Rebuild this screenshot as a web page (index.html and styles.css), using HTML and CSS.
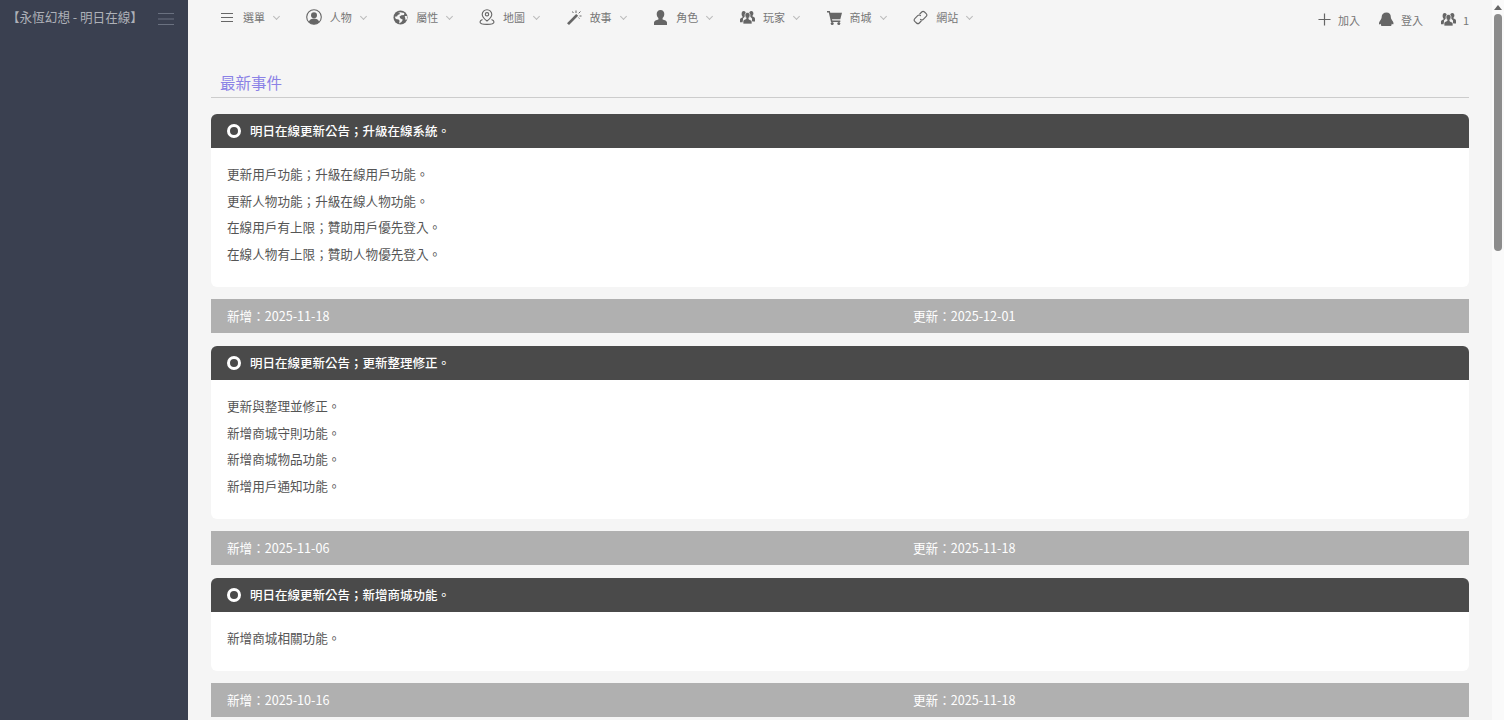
FILE: index.html
```html
<!DOCTYPE html>
<html lang="zh-Hant">
<head>
  <meta charset="UTF-8">
  <title>永恆幻想 - 明日在線</title>
  <link rel="stylesheet" href="styles.css">
</head>
<body>

<div class="layout">
  <aside class="sidebar">
    <span class="brand">【永恆幻想 - 明日在線】</span>
    <svg class="burger" width="16" height="12" viewBox="0 0 16 12"><path d="M0 .5h16M0 6h16M0 11.500h16" stroke="#6a7180" fill="none"/></svg>
  </aside>

  <div class="main">
    <nav class="topbar">
      <ul class="menu">
        <li><svg class="ico" viewBox="0 0 15 15"><path d="M1 3.500h12M1 7.500h12M1 11.500h12" stroke="#666" stroke-width="1.200" fill="none"/></svg><span>選單</span><i class="caret"></i></li>
        <li><svg class="ico big" viewBox="0 0 16 16"><circle cx="8" cy="8" r="7.300" fill="none" stroke="#666" stroke-width="1.100"/><circle cx="8" cy="6.300" r="3" fill="#666"/><path d="M2.800 13c.8-2.700 3-3.400 5.200-3.400s4.400.7 5.200 3.400a7.200 7.200 0 0 1-10.400 0z" fill="#666"/></svg><span>人物</span><i class="caret"></i></li>
        <li><svg class="ico" viewBox="0 0 16 16"><circle cx="8" cy="8" r="7.500" fill="#666"/><path d="M4.500 1.800l2.800 1-.3 1.700-2 .7-.5 1.500-2.500.6L3 9.500l3 .5 1 1.500-.5 3L9 12.800l1.500-2.300-2.800-1.800-.7-1.700L9 5.500l2.800-.3.200-2zM12.500 6.300l2.300.2.200 3-1.500 1.500z" fill="#f5f5f5"/></svg><span>屬性</span><i class="caret"></i></li>
        <li><svg class="ico big" viewBox="0 0 16 16"><path d="M8 .7a4.800 4.800 0 0 1 4.800 4.800C12.800 8.400 8 12 8 12S3.200 8.400 3.200 5.500A4.800 4.800 0 0 1 8 .7z" fill="none" stroke="#666" stroke-width="1.100"/><circle cx="8" cy="5.300" r="1.700" fill="none" stroke="#666" stroke-width="1.100"/><path d="M3.500 10.500C1.800 11.200 1 12 1 13c0 1.400 3 2.400 7 2.400s7-1 7-2.400c0-1-.8-1.800-2.500-2.500" fill="none" stroke="#666" stroke-width="1.100"/></svg><span>地圖</span><i class="caret"></i></li>
        <li><svg class="ico" viewBox="0 0 15 15"><path d="M0 13.200L9.200 4l2 1.800L2 15z" fill="#666"/><path d="M5.500 1.500l.8 1.500M9 .5v2.500M13.500 1.500l-1.800 1.800M14.500 6h-2M12.500 8.500l-1-.8" stroke="#666" fill="none"/></svg><span>故事</span><i class="caret"></i></li>
        <li><svg class="ico" viewBox="0 0 15 15"><path d="M7.500 0c2.500 0 3.800 1.800 3.800 4 0 1.800-.8 3.300-1.700 4v1.500c2 .8 4.400 1.200 4.400 3V15H1v-2.500c0-1.800 2.400-2.200 4.400-3V8C4.500 7.300 3.700 5.800 3.700 4c0-2.200 1.300-4 3.800-4z" fill="#666"/></svg><span>角色</span><i class="caret"></i></li>
        <li><svg class="ico" viewBox="0 0 15 15"><use href="#users"/></svg><span>玩家</span><i class="caret"></i></li>
        <li><svg class="ico" viewBox="0 0 15 15"><path d="M0 1h2.800l.5 1.800H15l-1.700 6.400H5l.3 1.300h8v1.400H4L1.800 2.400H0z" fill="#666"/><circle cx="5.200" cy="13.500" r="1.500" fill="#666"/><circle cx="11.800" cy="13.500" r="1.500" fill="#666"/></svg><span>商城</span><i class="caret"></i></li>
        <li><svg class="ico" viewBox="0 0 15 15"><g fill="none" stroke="#666" stroke-width="1.100" stroke-linecap="round"><path d="M6.800 4l1.900-2a2 2 0 0 1 2.800 0l1.700 1.600a2 2 0 0 1 0 2.800l-2.900 2.900a2 2 0 0 1-2.800 0"/><path d="M8.200 11l-1.900 2a2 2 0 0 1-2.800 0l-1.700-1.600a2 2 0 0 1 0-2.800l2.900-2.900a2 2 0 0 1 2.800 0"/></g></svg><span>網站</span><i class="caret"></i></li>
      </ul>
      <ul class="menu right">
        <li><svg class="ico plus" viewBox="0 0 14 14"><path d="M7 .5v13M.5 7h13" stroke="#666" stroke-width="1.300" fill="none"/></svg><span>加入</span></li>
        <li><svg class="ico" viewBox="0 0 15 15"><path d="M7.500.5c2.800 0 4.300 1.900 4.300 4.300 0 1.600.9 2.800 1.800 4.100.9 1.300 1.300 2.900.5 3.500l-1.500-.7c.2 1.100-.1 2-.6 2.300H2.500c-.5-.3-.8-1.200-.6-2.300l-1.500.7c-.8-.6-.4-2.200.5-3.500.9-1.300 1.800-2.500 1.800-4.100C2.700 2.400 4.700.5 7.500.5z" fill="#666"/></svg><span>登入</span></li>
        <li><svg class="ico" viewBox="0 0 15 15">
          <g id="users" fill="#666">
            <path d="M3.700 1c1.400 0 2.100 1 2.100 2.300 0 1-.4 1.900-.9 2.300v1L3 8.500v3.800H0v-2.800c0-1.300 1.500-1.700 2.500-2.100v-1c-.5-.4-.9-1.300-.9-2.300C1.600 2 2.300 1 3.700 1zM11.300 1c1.400 0 2.100 1 2.100 2.300 0 1-.4 1.900-.9 2.300v1c1 .4 2.500.8 2.500 2.100v2.800h-3V8.500l-1.900-1.900v-1c-.5-.4-.9-1.300-.9-2.300C9.200 2 9.900 1 11.300 1z"/>
            <path d="M7.500 2.500c1.700 0 2.500 1.200 2.500 2.700 0 1.200-.5 2.200-1.100 2.700v1.300c1.300.5 3.100 1 3.100 2.500V14H3v-2.800c0-1.500 1.800-2 3.100-2.500V7.900C5.500 7.400 5 6.400 5 5.200c0-1.500.8-2.700 2.500-2.700z" stroke="#f5f5f5" stroke-width=".7"/>
          </g>
        </svg><span>1</span></li>
      </ul>
    </nav>

    <div class="content">
      <h3 class="page-title">最新事件</h3>

      <div class="panel">
        <div class="panel-head"><i class="ring"></i>明日在線更新公告；升級在線系統。</div>
        <div class="panel-body">
          <p>更新用戶功能；升級在線用戶功能。</p>
          <p>更新人物功能；升級在線人物功能。</p>
          <p>在線用戶有上限；贊助用戶優先登入。</p>
          <p>在線人物有上限；贊助人物優先登入。</p>
        </div>
      </div>
      <div class="dates"><span>新增：2025-11-18</span><span>更新：2025-12-01</span></div>

      <div class="panel">
        <div class="panel-head"><i class="ring"></i>明日在線更新公告；更新整理修正。</div>
        <div class="panel-body">
          <p>更新與整理並修正。</p>
          <p>新增商城守則功能。</p>
          <p>新增商城物品功能。</p>
          <p>新增用戶通知功能。</p>
        </div>
      </div>
      <div class="dates"><span>新增：2025-11-06</span><span>更新：2025-11-18</span></div>

      <div class="panel">
        <div class="panel-head"><i class="ring"></i>明日在線更新公告；新增商城功能。</div>
        <div class="panel-body">
          <p>新增商城相關功能。</p>
        </div>
      </div>
      <div class="dates"><span>新增：2025-10-16</span><span>更新：2025-11-18</span></div>
    </div>
  </div>

  <div class="scrollbar"><i class="arrow"></i><div class="thumb"></div></div>
</div>

</body>
</html>
```

FILE: styles.css
```css
* { box-sizing: border-box; }
html, body { height: 100%; margin: 0; overflow: hidden; }
body { font-family: "Noto Sans CJK TC", "Noto Sans", sans-serif; font-size: 12.6px; color: #555; background: #f5f5f5; }
.layout { display: flex; height: 720px; overflow: hidden; }

.sidebar { width: 188px; flex: none; background: #3a4050; display: flex; justify-content: space-between; align-items: flex-start; padding: 8px 14px 0 7px; color: #aeb1b8; }
.brand { font-size: 12.6px; line-height: 18px; white-space: nowrap; }
.burger { margin-top: 5px; }

.main { flex: 1; min-width: 0; }
.topbar { display: flex; justify-content: space-between; height: 36px; padding: 0 23px 0 32px; }
.menu { display: flex; list-style: none; margin: 0; padding: 0; }
.menu li { display: flex; align-items: center; width: 86.670px; height: 34px; font-size: 11px; color: #777; white-space: nowrap; }
.menu.right li { width: auto; margin-left: 19px; padding-top: 5px; }
.menu.right li:last-child { margin-left: 18px; }
.menu.right .ico { margin-right: 7px; }
.ico { width: 15px; height: 15px; margin-right: 8px; flex: none; }
.ico.big { width: 16px; height: 16px; margin-left: -1px; }
.ico.plus { width: 13px; height: 13px; }
.caret { width: 5px; height: 5px; margin: -2px 0 0 9px; border-right: 1px solid #bbb; border-bottom: 1px solid #bbb; transform: rotate(45deg); }

.content { padding: 0 23px; }
.page-title { margin: 0 0 16px; height: 62px; padding: 33px 0 0 9px; font-size: 15.500px; line-height: 26px; font-weight: 400; color: #8b82e6; border-bottom: 1px solid #ccc; }

.panel { margin-bottom: 12px; }
.panel-head { display: flex; align-items: center; height: 34px; padding: 0 0 2px 16px; background: #4a4a4a; color: #fff; font-size: 12.500px; font-weight: 500; border-radius: 6px 6px 0 0; }
.ring { width: 14px; height: 14px; margin: 2px 9px 0 0; border: 3px solid #fff; border-radius: 50%; }
.panel-body { background: #fff; padding: 13px 16px 19.500px; border-radius: 0 0 6px 6px; }
.panel-body p { margin: 0; height: 26.625px; line-height: 26.625px; }

.dates { display: flex; height: 34px; align-items: center; padding: 0 0 2px 16px; margin-bottom: 13px; background: #b0b0b0; color: #fff; }
.dates span { flex: none; width: 686px; }

.scrollbar { width: 12px; flex: none; background: #fafafa; position: relative; }
.arrow { position: absolute; left: 2px; top: 5px; border: 4px solid transparent; border-top: 0; border-bottom: 5px solid #666; }
.thumb { position: absolute; left: 2px; top: 14px; width: 8px; height: 237px; background: #8c8c8c; border-radius: 4px; }
```
